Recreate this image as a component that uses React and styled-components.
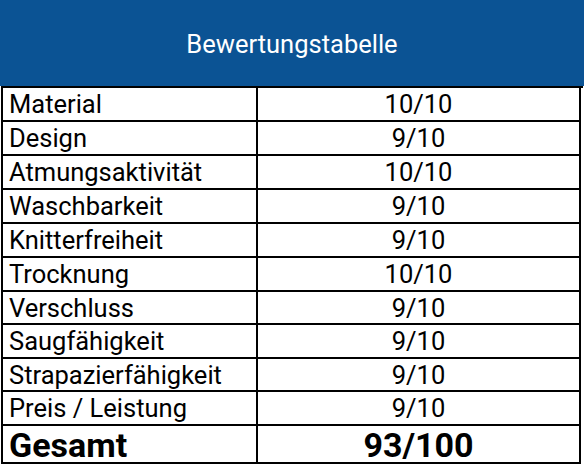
import { Fragment } from 'react';
import styled, { createGlobalStyle } from 'styled-components';

const GlobalStyle = createGlobalStyle`
  html, body {
    margin : 0;
    padding : 0;
    background : #ffffff;
    font-family : Roboto, "Liberation Sans", sans-serif;
  }
`;

const ratings = [
  { label : 'Material', score : '10/10' },
  { label : 'Design', score : '9/10' },
  { label : 'Atmungsaktivität', score : '10/10' },
  { label : 'Waschbarkeit', score : '9/10' },
  { label : 'Knitterfreiheit', score : '9/10' },
  { label : 'Trocknung', score : '10/10' },
  { label : 'Verschluss', score : '9/10' },
  { label : 'Saugfähigkeit', score : '9/10' },
  { label : 'Strapazierfähigkeit', score : '9/10' },
  { label : 'Preis / Leistung', score : '9/10' },
];

const Page = styled.div`
      width : 584px;
      height : 468px;
      display : flex;
      flex-direction : column;
`;

const Header = styled.div`
      height : 86px;
      background : #0b5394;
      color : #ffffff;
      display : flex;
      align-items : center;
      justify-content : center;
      font-size : 25.5px;
      padding-top : 1px;
      box-sizing : border-box;
`;

const Grid = styled.div`
      margin-left : 1px;
      width : 580px;
      display : grid;
      grid-template-columns : 255px 323px;
      grid-template-rows : repeat(6, 34px) 33px 34px 33px 34px 38px;
      border-left : 2px solid #000;
      border-top : 2px solid #000;
`;

const Cell = styled.div`
      box-sizing : border-box;
      border-right : 2px solid #000;
      border-bottom : 2px solid #000;
      display : flex;
      align-items : center;
      justify-content : ${(props) => (props.$center ? 'center' : 'flex-start')};
      padding-left : ${(props) => (props.$center ? '0' : '6px')};
      padding-top : 2px;
      font-size : ${(props) => (props.$total ? '34px' : '25.5px')};
      font-weight : ${(props) => (props.$total ? 700 : 400)};
      color : #000;
      line-height : 1;
      white-space : nowrap;
`;

const App = () => {
  return (
    <Page>
      <GlobalStyle/>
      <Header>Bewertungstabelle</Header>
      <Grid>
        {ratings.map((item) => (
          <Fragment key={item.label}>
            <Cell>{item.label}</Cell>
            <Cell $center>{item.score}</Cell>
          </Fragment>
        ))}
        <Cell $total>Gesamt</Cell>
        <Cell $total $center>93/100</Cell>
      </Grid>
    </Page>
  )
}

export default App
